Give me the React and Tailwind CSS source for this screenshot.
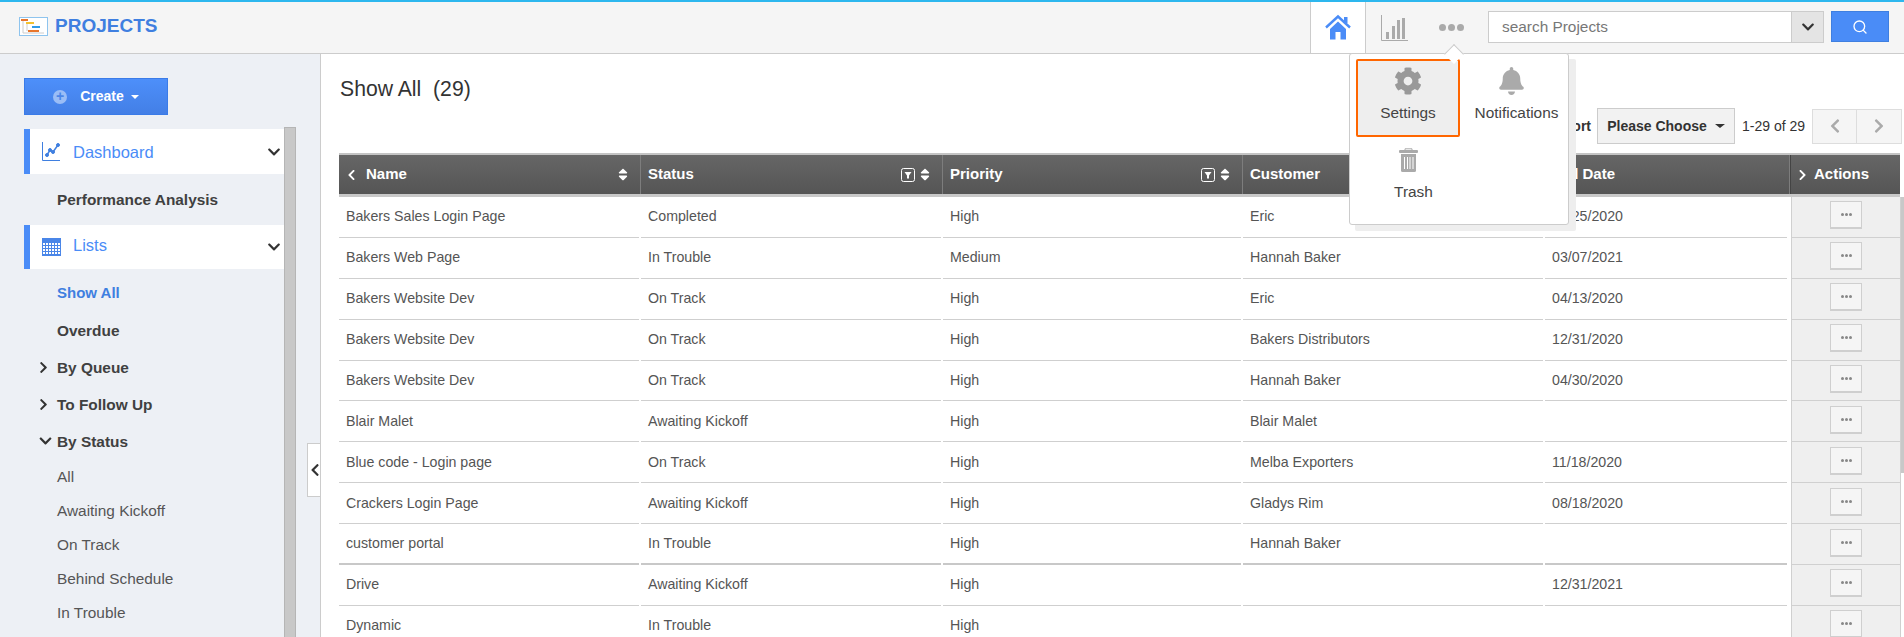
import React from 'react';
import { FaCog, FaBell, FaChevronDown, FaChevronRight, FaChevronLeft, FaSortUp, FaSortDown } from 'react-icons/fa';
import { Search } from 'lucide-react';

const rows = [
  ['Bakers Sales Login Page', 'Completed', 'High', 'Eric', '02/25/2020'],
  ['Bakers Web Page', 'In Trouble', 'Medium', 'Hannah Baker', '03/07/2021'],
  ['Bakers Website Dev', 'On Track', 'High', 'Eric', '04/13/2020'],
  ['Bakers Website Dev', 'On Track', 'High', 'Bakers Distributors', '12/31/2020'],
  ['Bakers Website Dev', 'On Track', 'High', 'Hannah Baker', '04/30/2020'],
  ['Blair Malet', 'Awaiting Kickoff', 'High', 'Blair Malet', ''],
  ['Blue code - Login page', 'On Track', 'High', 'Melba Exporters', '11/18/2020'],
  ['Crackers Login Page', 'Awaiting Kickoff', 'High', 'Gladys Rim', '08/18/2020'],
  ['customer portal', 'In Trouble', 'High', 'Hannah Baker', ''],
  ['Drive', 'Awaiting Kickoff', 'High', '', '12/31/2021'],
  ['Dynamic', 'In Trouble', 'High', '', ''],
];

const GanttLogo = () => (
  <svg width="29" height="19" viewBox="0 0 29 19">
    <rect x="0.5" y="0.5" width="28" height="18" fill="#fff" stroke="#8ec4ee" />
    <rect x="2" y="2" width="7" height="2" fill="#e8762c" />
    <rect x="7" y="5" width="8" height="2" fill="#f2c230" />
    <rect x="13" y="9" width="8" height="2" fill="#2f9be8" />
    <rect x="9" y="13" width="11" height="2" fill="#e8762c" />
    <path d="M4 4V16H25M8 7V14" stroke="#ccc" fill="none" />
  </svg>
);

const HomeIcon = () => (
  <svg width="26" height="26" viewBox="0 0 26 26" fill="#4a8cf7">
    <path d="M1 13.5L13 2.5L25 13.5" fill="none" stroke="#4a8cf7" strokeWidth="2.4" />
    <rect x="19" y="3" width="3.5" height="6" />
    <path d="M5 15L13 7.5L21 15V25.5H15.5V18H10.5V25.5H5Z" />
  </svg>
);

const TrendIcon = () => (
  <svg width="18" height="19" viewBox="0 0 18 19" fill="none" stroke="#3f7fe0">
    <path d="M0.5 0V18.5H18" strokeWidth="1" />
    <path d="M5 13L8 8L11 10L16 3" strokeWidth="1.5" />
    <circle cx="5" cy="13" r="1.5" fill="#3f7fe0" />
    <circle cx="8" cy="8" r="1.5" fill="#3f7fe0" />
    <circle cx="11" cy="10" r="1.5" fill="#3f7fe0" />
    <circle cx="16" cy="3" r="1.5" fill="#3f7fe0" />
  </svg>
);

const CalendarIcon = () => (
  <svg width="19" height="18" viewBox="0 0 19 18">
    <rect width="19" height="18" fill="#4a86e8" />
    <g fill="#fff">
      {[5, 8, 11, 14].map(y => [1, 4, 7, 10, 13, 16].map(x => (
        <rect key={`${x}-${y}`} x={x} y={y} width="2" height="2" />
      )))}
    </g>
  </svg>
);

const BarsIcon = () => (
  <svg width="27" height="26" viewBox="0 0 27 26" fill="#aaa">
    <path d="M0.5 0V25.5H27" fill="none" stroke="#aaa" />
    <rect x="5" y="17" width="3" height="7" />
    <rect x="11" y="11" width="3" height="13" />
    <rect x="16" y="5" width="3" height="19" />
    <rect x="21" y="3" width="3" height="21" />
  </svg>
);

const TrashIcon = () => (
  <svg width="19" height="24" viewBox="0 0 19 24" fill="#aaa">
    <path d="M6 2V0.8H13V2" fill="none" stroke="#aaa" />
    <rect x="0" y="2" width="19" height="3" rx="1" />
    <path d="M2 6H17V22.5a1.5 1.5 0 0 1 -1.5 1.5H3.5a1.5 1.5 0 0 1 -1.5 -1.5Z" />
    <g fill="#fff">
      <rect x="5" y="9" width="1" height="12" />
      <rect x="8" y="9" width="1" height="12" />
      <rect x="10.5" y="9" width="1" height="12" />
      <rect x="13.5" y="9" width="1" height="12" />
    </g>
  </svg>
);

const FilterIcon = () => (
  <svg width="14" height="14" viewBox="0 0 14 14" fill="none">
    <rect x="0.5" y="0.5" width="13" height="13" rx="2" stroke="#fff" />
    <path d="M3.5 4H10.5L8 7.5V10.5H6V7.5Z" fill="#fff" />
  </svg>
);

const SortIcon = () => (
  <span className="relative inline-block w-[10px] h-[15px] text-white">
    <FaSortUp className="absolute inset-0 w-[10px] h-[15px]" />
    <FaSortDown className="absolute inset-0 w-[10px] h-[15px]" />
  </span>
);

const HeadCell = ({ w, filter, sort, children }) => (
  <div className={`${w} h-full flex items-center border-r border-[#7d7d7d] pl-[7px] pr-[12px] text-[15px] font-bold text-white`}>
    <span className="flex-1 flex items-center min-w-0">{children}</span>
    {filter && <FilterIcon />}
    {sort && <span className="ml-[5px] flex"><SortIcon /></span>}
  </div>
);

const BodyCell = ({ w, thick, children }) => (
  <div className={`${w} h-full flex items-center pl-[7px] ${thick ? 'border-b-2 border-[#c8c8c8]' : 'border-b border-[#cfcfcf]'} overflow-hidden whitespace-nowrap`}>{children}</div>
);

const SubItem = ({ children, chevron, down }) => (
  <div className="relative h-[37px] pl-[33px] flex items-center text-[15.4px] font-bold text-[#404040]">
    {chevron && <FaChevronRight className="absolute left-[14px] top-[12px] w-[11px] h-[13px] text-[#333]" />}
    {down && <FaChevronDown className="absolute left-[14px] top-[11px] w-[15px] h-[14px] text-[#333]" />}
    {children}
  </div>
);

const MenuHead = ({ icon, label, h, textClass }) => (
  <div className={`${h} flex items-center bg-white border-l-[6px] border-[#4a8cf7] pl-[12px] pr-[3px]`}>
    <span className="w-[31px] flex">{icon}</span>
    <span className={`flex-1 text-[16.5px] text-[#4a8cf7] ${textClass}`}>{label}</span>
    <FaChevronDown className="w-[14px] h-[14px] text-[#333]" />
  </div>
);

export default function App() {
  return (
    <div className="relative w-[1904px] h-[637px] overflow-hidden bg-white font-['Liberation_Sans',Arial,sans-serif]">
      {/* top bar */}
      <header className="h-[54px] bg-[#f5f5f5] border-t-2 border-b border-t-[#2db7ee] border-b-[#cccccc] flex items-stretch">
        <div className="flex items-center gap-[7px] pl-[19px] w-[1310px] pb-[3px]">
          <GanttLogo />
          <span className="text-[19px] font-bold text-[#3f7fe0]">PROJECTS</span>
        </div>
        <div className="w-[56px] bg-white border-x border-[#cccccc] flex items-center justify-center pb-[1px]">
          <HomeIcon />
        </div>
        <div className="ml-[15px] flex items-center"><BarsIcon /></div>
        <div className="ml-[31px] flex items-center gap-[2px]">
          <span className="w-[7px] h-[7px] rounded-full bg-[#aaa]" />
          <span className="w-[7px] h-[7px] rounded-full bg-[#aaa]" />
          <span className="w-[7px] h-[7px] rounded-full bg-[#aaa]" />
        </div>
        <div className="ml-[24px] flex items-start pt-[9px]">
          <div className="w-[304px] h-[32px] bg-white border border-[#cccccc] pl-[13px] flex items-center text-[15.4px] text-[#777]">search Projects</div>
          <div className="w-[32px] h-[32px] bg-[#e4e4e4] border border-l-0 border-[#cccccc] flex items-center justify-center">
            <FaChevronDown className="w-[14px] h-[14px] text-[#333]" />
          </div>
          <div className="ml-[7px] w-[58px] h-[31px] bg-[#4a8cf7] border border-[#3f7fe0] flex items-center justify-center">
            <Search className="w-[16px] h-[16px] text-white" />
          </div>
        </div>
      </header>

      <div className="flex h-[583px]">
        {/* sidebar */}
        <aside className="relative w-[321px] shrink-0 bg-[#edf0f5] border-r border-[#cccccc] flex pl-[24px] overflow-hidden">
          <div className="w-[260px] shrink-0 pt-[24px]">
            <button className="w-[144px] h-[37px] bg-gradient-to-b from-[#4d8ffa] to-[#437fe6] border border-[#3a7be8] flex items-center justify-center text-[14px] font-bold text-white">
              <span className="w-[14px] h-[14px] rounded-full bg-[#9abdf6] text-[#4a86e8] text-[14px] leading-[13px] font-bold text-center mr-[13px]">+</span>
              Create
              <span className="ml-[7px] border-x-[4px] border-x-transparent border-t-[4px] border-t-white" />
            </button>
            <div className="mt-[14px]">
              <MenuHead h="h-[45px]" icon={<TrendIcon />} label="Dashboard" textClass="pt-[1px]" />
              <div className="h-[51px] pl-[33px] flex items-center text-[15.4px] font-bold text-[#404040]">Performance Analysis</div>
              <MenuHead h="h-[44px]" icon={<CalendarIcon />} label="Lists" textClass="pb-[3px]" />
              <div className="h-[37px] mt-[6px] pl-[33px] flex items-center text-[15px] font-bold text-[#3f7fe0]">Show All</div>
              <SubItem>Overdue</SubItem>
              <SubItem chevron>By Queue</SubItem>
              <SubItem chevron>To Follow Up</SubItem>
              <SubItem down>By Status</SubItem>
              {['All', 'Awaiting Kickoff', 'On Track', 'Behind Schedule', 'In Trouble'].map(s => (
                <div key={s} className="h-[34px] pl-[33px] flex items-center text-[15.4px] text-[#555]">{s}</div>
              ))}
            </div>
          </div>
          <div className="w-[12px] h-full mt-[73px] bg-[#c8c8c8] border-x border-t border-[#b5b5b5]" />
          <div className="absolute right-0 top-[389px] w-[13px] h-[54px] bg-white border-y border-l border-[#cccccc] flex items-center justify-end">
            <FaChevronLeft className="w-[10px] h-[14px] text-[#333]" />
          </div>
        </aside>

        {/* main */}
        <main className="flex-1 min-w-0 pl-[18px] pr-[2px]">
          <div className="h-[99px] flex items-start">
            <h1 className="mt-[19px] ml-[1px] text-[21.2px] font-normal text-[#333] whitespace-pre">Show All  (29)</h1>
            <div className="ml-auto mt-[54px] flex items-center">
              <span className="text-[14px] font-bold text-[#333] mr-[6px]">Sort</span>
              <div className="w-[138px] h-[36px] bg-[#f2f2f2] border border-[#cccccc] flex items-center justify-center text-[14px] font-bold text-[#333]">
                Please Choose
                <span className="ml-[8px] border-x-[5px] border-x-transparent border-t-[4px] border-t-[#333]" />
              </div>
              <span className="ml-[7px] w-[70px] text-[14px] text-[#333]">1-29 of 29</span>
              <div className="w-[45px] h-[35px] bg-[#f5f5f5] border border-[#dddddd] flex items-center justify-center">
                <FaChevronLeft className="w-[12px] h-[16px] text-[#aaa]" />
              </div>
              <div className="w-[45px] h-[35px] bg-[#f5f5f5] border border-l-0 border-[#dddddd] flex items-center justify-center">
                <FaChevronRight className="w-[12px] h-[16px] text-[#aaa]" />
              </div>
            </div>
          </div>

          {/* table */}
          <div className="h-[44px] w-[1561px] flex bg-gradient-to-b from-[#666666] to-[#555555] border-t-2 border-b-[3px] border-t-[#c4c4c4] border-b-[#c8c8c8]">
            <HeadCell w="w-[302px]" sort>
              <FaChevronLeft className="w-[9px] h-[12px] mr-[10px] ml-[1px]" />Name
            </HeadCell>
            <HeadCell w="w-[302px]" filter sort>Status</HeadCell>
            <HeadCell w="w-[300px]" filter sort>Priority</HeadCell>
            <HeadCell w="w-[300px]">Customer</HeadCell>
            <HeadCell w="w-[247px]">End Date</HeadCell>
            <div className="w-[110px] h-full flex items-center pl-[7px] text-[15px] font-bold text-white border-l border-[#444]">
              <FaChevronRight className="w-[9px] h-[12px] mr-[7px]" />Actions
            </div>
          </div>
          {rows.map((r, i) => (
            <div key={i} className="h-[40.9px] flex text-[14.2px] text-[#555]">
              <div className="w-[302px] pr-[2px] h-full"><BodyCell w="w-full" thick={i === 8}>{r[0]}</BodyCell></div>
              <div className="w-[302px] pr-[2px] h-full"><BodyCell w="w-full" thick={i === 8}>{r[1]}</BodyCell></div>
              <div className="w-[300px] pr-[2px] h-full"><BodyCell w="w-full" thick={i === 8}>{r[2]}</BodyCell></div>
              <div className="w-[302px] pr-[2px] h-full"><BodyCell w="w-full" thick={i === 8}>{r[3]}</BodyCell></div>
              <div className="w-[246px] pr-[4px] h-full"><BodyCell w="w-full" thick={i === 8}>{r[4]}</BodyCell></div>
              <div className="w-[110px] h-full bg-[#efefef] border-x border-b border-[#d0d0d0] flex items-center justify-center">
                <div className="w-[32px] h-[28px] bg-[#f5f5f5] border border-[#cfcfcf] border-b-2 flex items-center justify-center gap-[1px] mb-[3px]">
                  <span className="w-[3px] h-[3px] rounded-full bg-[#888]" />
                  <span className="w-[3px] h-[3px] rounded-full bg-[#888]" />
                  <span className="w-[3px] h-[3px] rounded-full bg-[#888]" />
                </div>
              </div>
            </div>
          ))}
        </main>
      </div>

      {/* page scrollbar thumb */}
      <div className="absolute right-0 top-[197px] w-[3px] h-[276px] bg-[#c8c8c8]" />

      {/* dropdown over the page */}
      <div className="absolute left-[1355px] top-[59px] w-[221px] h-[172px] bg-[#eeeeee] rounded-[2px]" />
      <div className="absolute left-[1349px] top-[53px] w-[220px] h-[172px] bg-white border border-[#cccccc] rounded-[3px] pl-[6px] pr-[5px] pt-[5px] text-[15.4px] text-[#444]">
        <div className="grid grid-cols-[104px_1fr] grid-rows-[78px_1fr] h-full">
          <div className="bg-[#eeeeee] border-2 border-[#ff6600] rounded-[2px] flex flex-col items-center pt-[6px]">
            <FaCog className="w-[28px] h-[28px] text-[#999]" />
            <span className="mt-[6px]">Settings</span>
          </div>
          <div className="flex flex-col items-center pt-[8px]">
            <FaBell className="w-[25px] h-[28px] text-[#aaa]" />
            <span className="mt-[6px] pl-[10px] whitespace-nowrap">Notifications</span>
          </div>
          <div className="flex flex-col items-center pt-[11px]">
            <TrashIcon />
            <span className="mt-[8px] pl-[11px]">Trash</span>
          </div>
        </div>
      </div>
      <div className="absolute left-[1447px] top-[47px] w-[14px] h-[14px] rotate-45 bg-white border-l border-t border-[#cccccc]" />
    </div>
  );
}
